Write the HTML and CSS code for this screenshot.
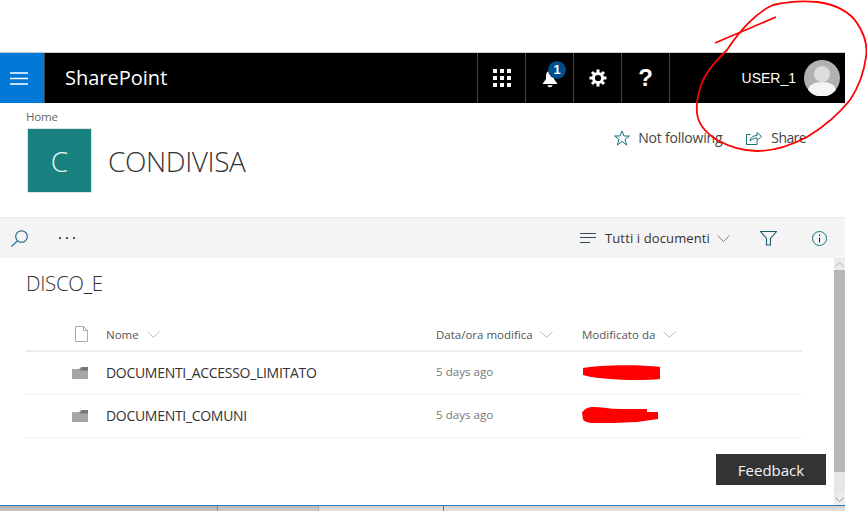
FILE: index.html
```html
<!DOCTYPE html>
<html lang="it">
<head>
<meta charset="utf-8">
<title>CONDIVISA</title>
<link rel="stylesheet" href="styles.css">
</head>
<body>
<div class="screen">
  <div class="browser">
    <header class="suitebar">
      <button class="waffle"><svg width="18" height="13" viewBox="0 0 18 13"><path d="M0 1h18M0 6.500h18M0 12h18" stroke="#fff" stroke-width="1.600"/></svg></button>
      <div class="brand">SharePoint</div>
      <nav class="tools">
        <div class="tool"><svg width="18" height="18" viewBox="0 0 18 18" fill="#fff"><path d="M0 0h4v4H0zM7 0h4v4H7zM14 0h4v4h-4zM0 7h4v4H0zM7 7h4v4H7zM14 7h4v4h-4zM0 14h4v4H0zM7 14h4v4H7zM14 14h4v4h-4z"/></svg></div>
        <div class="tool"><svg class="bell" width="16" height="18" viewBox="0 0 16 18" fill="#fff"><path d="M8 1C5 1 4 3.400 4 6v3L.5 14h15L12 9V6C12 3.400 11 1 8 1zM5.500 15.200h5c0 1.300-1 2-2.500 2s-2.500-.7-2.500-2z"/></svg><span class="badge">1</span></div>
        <div class="tool"><svg width="18" height="18" viewBox="0 0 18 18"><circle cx="9" cy="9" r="4.600" fill="none" stroke="#fff" stroke-width="3"/><path d="M9 .5v3.500M9 14v3.500M.5 9H4M14 9h3.500M3 3l2.500 2.500M12.500 12.500L15 15M15 3l-2.500 2.500M5.500 12.500L3 15" stroke="#fff" stroke-width="3"/></svg></div>
        <div class="tool help">?</div>
      </nav>
      <div class="user">
        <span class="username">USER_1</span>
        <svg class="avatar" width="36" height="36" viewBox="0 0 36 36"><circle cx="18" cy="18" r="18" fill="#b1b1b1"/><circle cx="18" cy="14" r="8" fill="#dcdcdc"/><path d="M4 30c1-5 6-8 14-8s13 3 14 8a18 18 0 0 1-28 0z" fill="#f4f4f4"/></svg>
      </div>
    </header>

    <section class="sitehead">
      <div class="crumb">Home</div>
      <div class="siterow">
        <div class="sitelogo">C</div>
        <h1 class="sitename">CONDIVISA</h1>
        <div class="siteactions">
          <span class="action"><svg width="16" height="16" viewBox="0 0 16 16"><path d="M8 1l2 5h5.500l-4.500 3.300 1.700 5.700L8 11.500 3.300 15 5 9.300.5 6H6z" fill="none" stroke="#1b6f75"/></svg>Not following</span>
          <span class="action share"><svg width="16" height="14" viewBox="0 0 16 14"><path d="M4.500 3.500H.5v10h10.500V10M4 10c.5-3.500 3-5.500 7-5.500V1.500l4.500 4-4.500 4V7c-3 0-5 1-7 3z" fill="none" stroke="#1b6f75"/></svg>Share</span>
        </div>
      </div>
    </section>

    <div class="commandbar">
      <div class="cmd-left">
        <svg width="17" height="17" viewBox="0 0 17 17"><circle cx="10.500" cy="6.500" r="5.800" fill="none" stroke="#1b5e78" stroke-width="1.100"/><path d="M6.500 10.800L.5 16.500" stroke="#1b7fa8" stroke-width="1.200"/></svg>
        <svg width="16" height="2" viewBox="0 0 16 2" fill="#555"><path d="M0 0h2v2H0zM7 0h2v2H7zM14 0h2v2h-2z"/></svg>
      </div>
      <div class="cmd-right">
        <span class="viewpick"><svg width="16" height="10" viewBox="0 0 16 10"><path d="M0 .5h16M0 4.500h16M0 9.500h10" stroke="#2b4a55"/></svg><span class="viewname">Tutti i documenti</span><svg class="chev" width="13" height="7" viewBox="0 0 13 7"><path d="M.5.500l6 6 6-6" fill="none" stroke="#888"/></svg></span>
        <svg class="filter" width="17" height="15" viewBox="0 0 17 15"><path d="M.5.500h16l-6 7v6.500h-4V7.500z" fill="none" stroke="#1f5f6b" stroke-width="1.100"/></svg>
        <svg class="info" width="15" height="15" viewBox="0 0 15 15"><circle cx="7.500" cy="7.500" r="7" fill="none" stroke="#1b6f75"/><path d="M7.500 6.500v5M7.500 3.500v1.500" stroke="#222"/></svg>
      </div>
    </div>

    <main class="content">
      <div class="library">
        <h2 class="libtitle">DISCO_E</h2>
        <div class="row head">
          <span class="c-icon doc"><svg width="13" height="16" viewBox="0 0 13 16"><path d="M.5.500h8l4 4v11H.5zM8.500.500v4h4" fill="none" stroke="#aaa"/></svg></span>
          <span class="c-name">Nome<svg class="chev" width="13" height="7" viewBox="0 0 13 7"><path d="M.5.500l6 6 6-6" fill="none" stroke="#bbb"/></svg></span>
          <span class="c-date">Data/ora modifica<svg class="chev" width="13" height="7" viewBox="0 0 13 7"><path d="M.5.500l6 6 6-6" fill="none" stroke="#bbb"/></svg></span>
          <span class="c-by">Modificato da<svg class="chev" width="13" height="7" viewBox="0 0 13 7"><path d="M.5.500l6 6 6-6" fill="none" stroke="#bbb"/></svg></span>
        </div>
        <div class="row item">
          <span class="c-icon"><svg width="16" height="12" viewBox="0 0 16 12"><path d="M0 2h7l2-2h7v12H0z" fill="#a6a6a6"/><path d="M8 2.500l2.500-2.500H16v3.500H8z" fill="#767676"/></svg></span>
          <span class="c-name fname">DOCUMENTI_ACCESSO_LIMITATO</span>
          <span class="c-date when">5 days ago</span>
          <span class="c-by"></span>
        </div>
        <div class="row item">
          <span class="c-icon"><svg width="16" height="12" viewBox="0 0 16 12"><path d="M0 2h7l2-2h7v12H0z" fill="#a6a6a6"/><path d="M8 2.500l2.500-2.500H16v3.500H8z" fill="#767676"/></svg></span>
          <span class="c-name fname">DOCUMENTI_COMUNI</span>
          <span class="c-date when">5 days ago</span>
          <span class="c-by"></span>
        </div>
      </div>
      <div class="scrollbar">
        <div class="sb-arrow"><svg width="9" height="5" viewBox="0 0 9 5"><path d="M.5 4.500l4-4 4 4" fill="none" stroke="#b0b0b0"/></svg></div>
        <div class="sb-thumb"></div>
        <div class="sb-track"></div>
        <div class="sb-arrow"><svg width="9" height="5" viewBox="0 0 9 5"><path d="M.5.500l4 4 4-4" fill="none" stroke="#9a9a9a"/></svg></div>
      </div>
      <button class="feedback">Feedback</button>
    </main>

    <footer class="taskbar"><i class="seg s1"></i><i class="seg s2"></i><i class="seg s3"></i><i class="seg s4"></i></footer>
  </div>

  <svg class="ink" width="867" height="511" viewBox="0 0 867 511">
    <path d="M715 43L776 17" fill="none" stroke="#f00" stroke-width="1.800"/>
    <path d="M773 5C790 1 805 1 817 2C835 4 850 12 857 23C865 35 868 45 866 57C864 72 858 88 850 100C838 115 822 128 807 137C790 146 772 151 757 151C742 151 728 146 717 140C706 133 698 124 697 113C696 102 698 92 703 80C709 68 718 59 727 50C740 30 757 12 773 5z" fill="none" stroke="#f00" stroke-width="1.800"/>
    <path d="M583 368C595 365 640 364 660 367L660 379C640 381 600 380 583 375z" fill="#f00"/>
    <path d="M582 413C584 409 588 407 593 407C602 407 610 409 620 409L647 409L647 412L658 412L658 419L637 422C620 423 605 423 593 423C588 423 583 421 583 419z" fill="#f00"/>
  </svg>
</div>
</body>
</html>
```

FILE: styles.css
```css
* { box-sizing: border-box; }
html, body { margin: 0; padding: 0; background: #fff; }
body { font-family: "Open Sans", "Liberation Sans", sans-serif; color: #333; overflow: hidden; }
svg { display: block; flex: none; }

.screen { position: relative; width: 867px; height: 511px; overflow: hidden; padding-top: 52px; }
.browser { width: 845px; height: 459px; display: flex; flex-direction: column; border-top: 1px solid #ccc; }

.suitebar { flex: none; height: 50px; background: #000; display: flex; align-items: stretch; color: #fff; }
.waffle { width: 45px; border: 0; padding: 0 7px 0 0; background: #0078d7; border-right: 1px solid #444; display: flex; align-items: center; justify-content: center; }
.brand { font-size: 20px; line-height: 50px; padding-left: 20px; width: 432px; }
.tools { display: flex; }
.tool { position: relative; width: 48px; border-left: 1px solid #444; display: flex; align-items: center; justify-content: center; }
.tool:last-child { border-right: 1px solid #444; width: 49px; }
.bell { margin-top: 1px; }
.badge { position: absolute; left: 22px; top: 8px; width: 18px; height: 18px; border-radius: 50%; background: #004e8c; font: bold 13px/18px "Liberation Sans", sans-serif; text-align: center; }
.help { font: bold 24px/1 "Liberation Sans", sans-serif; }
.user { flex: 1; display: flex; align-items: center; justify-content: flex-end; padding-right: 5px; gap: 8px; }
.username { font: 14px "Liberation Sans", sans-serif; }

.sitehead { flex: none; height: 114px; padding: 7px 0 0 26px; }
.crumb { font-size: 11.500px; line-height: 14px; color: #666; letter-spacing: -.2px; height: 18px; }
.siterow { display: flex; align-items: center; height: 65px; }
.sitelogo { width: 65px; height: 65px; margin-left: 1px; background: #18807f; border: 1px solid #e2e2e2; color: #e8f4f4; font-size: 28px; font-weight: 300; display: flex; align-items: center; justify-content: center; }
.sitename { margin: 0 0 0 16px; font-size: 28px; font-weight: 300; letter-spacing: -.4px; color: #333; flex: 1; }
.siteactions { display: flex; gap: 24px; align-self: flex-start; margin: 1px 39px 0 0; }
.action { display: flex; align-items: center; gap: 8px; font-size: 14px; line-height: 18px; color: #444; letter-spacing: -.2px; }
.share { gap: 9px; letter-spacing: -.6px; }

.commandbar { flex: none; height: 41px; background: #f4f4f4; border-top: 1px solid #eaeaea; display: flex; align-items: center; justify-content: space-between; padding: 0 18px 0 11px; }
.cmd-left { display: flex; align-items: center; gap: 31px; }
.cmd-right { display: flex; align-items: center; }
.viewpick { display: flex; align-items: center; font-size: 13px; color: #333; }
.viewname { width: 105px; margin: 0 7px 0 9px; letter-spacing: .12px; white-space: nowrap; }
.filter { margin-left: 30px; }
.info { margin-left: 35px; }

.content { position: relative; flex: 1; display: flex; min-height: 0; }
.library { flex: 1; padding: 0 32px 0 26px; }
.libtitle { margin: 0; font-size: 20.500px; font-weight: 300; line-height: 26px; padding-top: 12px; height: 59px; color: #333; letter-spacing: -.3px; }
.row { display: flex; align-items: center; height: 43px; border-bottom: 1px solid #f0f0f0; }
.row.head { height: 35px; border-bottom: 2px solid #ececec; font-size: 11.500px; color: #555; padding-top: 2px; }
.c-icon { width: 80px; padding-left: 46px; }
.c-icon.doc { padding-left: 49px; margin-top: -2px; }
.c-name { width: 330px; display: flex; align-items: center; gap: 8px; }
.c-date { width: 146px; display: flex; align-items: center; gap: 7px; }
.c-by { display: flex; align-items: center; gap: 8px; }
.fname { font-size: 14px; color: #333; letter-spacing: -.3px; padding-bottom: 2px; }
.when { font-size: 11.600px; color: #777; padding-bottom: 3px; }
.scrollbar { flex: none; width: 11px; display: flex; flex-direction: column; }
.sb-arrow { height: 12px; background: #ececec; display: flex; align-items: center; justify-content: center; }
.sb-thumb { height: 202px; background: #b7b7b7; }
.sb-track { flex: 1; background: #e6e6e6; }
.feedback { position: absolute; right: 19px; top: 196px; width: 110px; height: 31px; background: #333; color: #f2f2f2; border: 0; padding: 0; font: 15px "Open Sans", sans-serif; }

.taskbar { flex: none; height: 6px; border-top: 1px solid #2b7fc4; display: flex; width: 845px; }
.seg { display: block; height: 100%; }
.s1 { width: 218px; background: linear-gradient(#b0b0b0, #c8c8c8); border-right: 1px solid #888; }
.s2 { width: 101px; background: linear-gradient(#b8b8b8, #cdcdcd); border-right: 1px solid #aaa; }
.s3 { width: 125px; background: linear-gradient(#d0d0d0, #e4e4e4); border-right: 1px solid #2b7fc4; }
.s4 { flex: 1; background: linear-gradient(#d0d0d0, #e4e4e4); }

.ink { position: absolute; left: 0; top: 0; pointer-events: none; }
```
